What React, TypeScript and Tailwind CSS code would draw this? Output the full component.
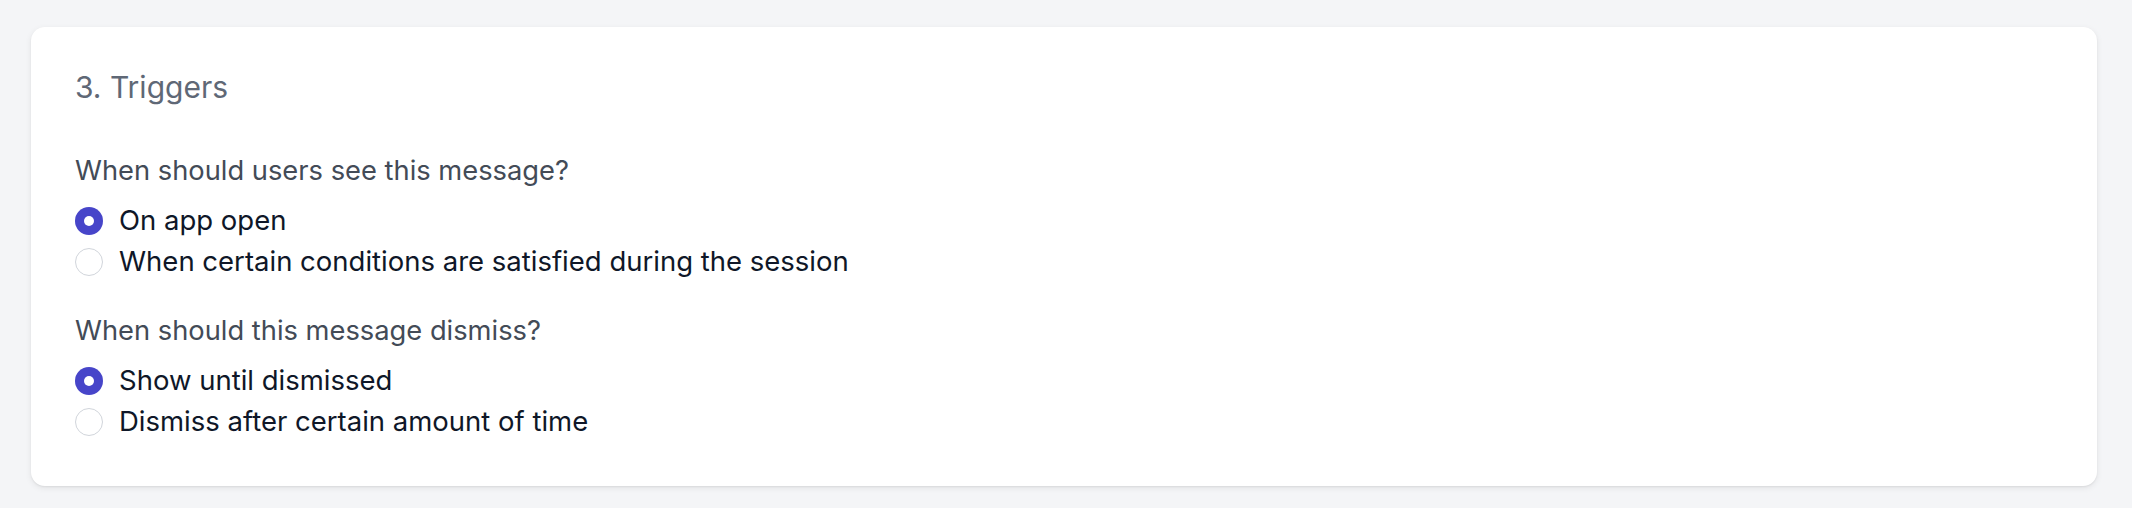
import { useState } from "react";

type Option = { id: string; label: string };

const triggerOptions: Option[] = [
  { id: "open", label: "On app open" },
  { id: "conditions", label: "When certain conditions are satisfied during the session" },
];

const dismissOptions: Option[] = [
  { id: "until", label: "Show until dismissed" },
  { id: "timed", label: "Dismiss after certain amount of time" },
];

function Radio({ checked }: { checked: boolean }) {
  if (checked) {
    return (
      <span className="flex h-[28px] w-[28px] shrink-0 items-center justify-center rounded-full bg-[#4745c9]">
        <span className="h-[10px] w-[10px] rounded-full bg-white" />
      </span>
    );
  }
  return (
    <span className="h-[28px] w-[28px] shrink-0 rounded-full border border-[#d1d5db] bg-white" />
  );
}

function RadioGroup({
  options,
  value,
  onChange,
}: {
  options: Option[];
  value: string;
  onChange: (id: string) => void;
}) {
  return (
    <div className="mt-[13px] flex flex-col">
      {options.map((o) => (
        <label
          key={o.id}
          onClick={() => onChange(o.id)}
          className="flex h-[41px] cursor-pointer items-center gap-[16px] text-[27.5px] text-[#0f1728]"
        >
          <Radio checked={value === o.id} />
          <span>{o.label}</span>
        </label>
      ))}
    </div>
  );
}

export default function App() {
  const [trigger, setTrigger] = useState("open");
  const [dismiss, setDismiss] = useState("until");

  return (
    <div className="min-h-[508px] bg-[#f4f5f7] pb-[24px] pl-[31px] pr-[35px] pt-[27px] font-['Inter',sans-serif]">
      <div className="rounded-[14px] bg-white px-[44px] pb-[44px] pt-[42px] shadow-[0_2px_6px_rgba(0,0,0,0.08),0_1px_2px_rgba(0,0,0,0.06)]">
        <h3 className="text-[30px] leading-[36px] text-[#5f6876]">3. Triggers</h3>

        <p className="mt-[50px] text-[27.3px] leading-[32px] text-[#434b57]">
          When should users see this message?
        </p>
        <RadioGroup options={triggerOptions} value={trigger} onChange={setTrigger} />

        <p className="mt-[33px] text-[27.3px] leading-[32px] text-[#434b57]">
          When should this message dismiss?
        </p>
        <RadioGroup options={dismissOptions} value={dismiss} onChange={setDismiss} />
      </div>
    </div>
  );
}
